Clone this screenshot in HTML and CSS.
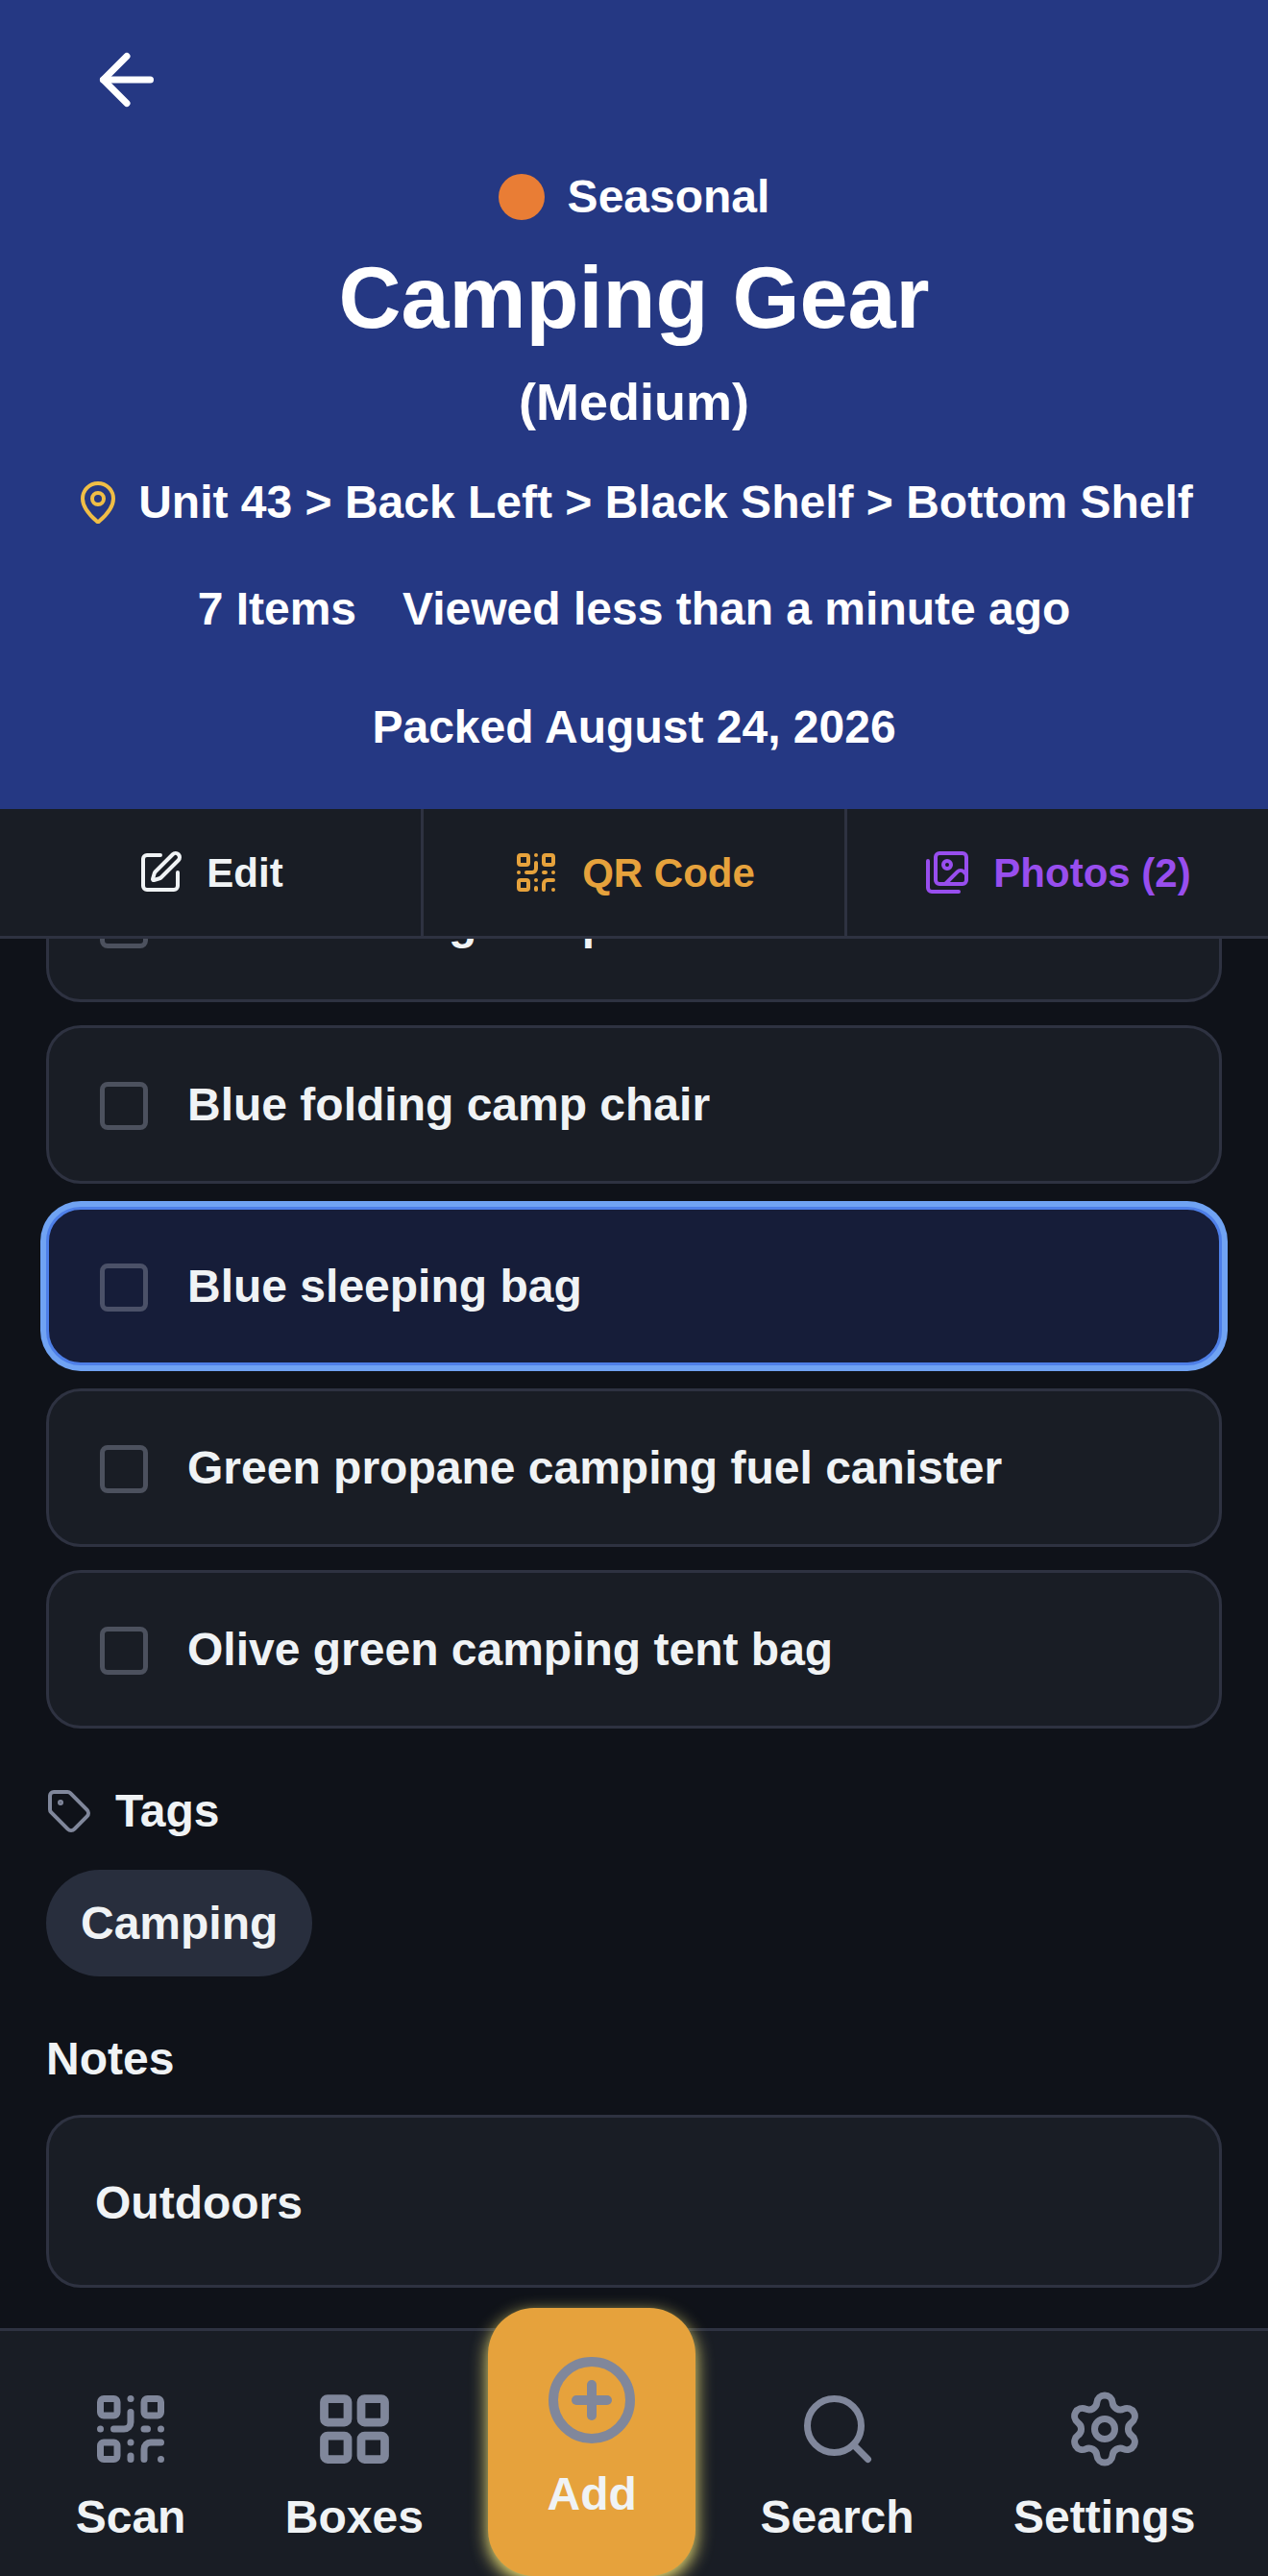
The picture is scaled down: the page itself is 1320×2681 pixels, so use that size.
FILE: index.html
```html
<!DOCTYPE html>
<html lang="en">
<head>
<meta charset="utf-8">
<meta name="viewport" content="width=device-width, initial-scale=1">
<title>Camping Gear</title>
<link rel="stylesheet" href="styles.css">
</head>
<body>
<svg class="sprite" aria-hidden="true">
  <symbol id="qr" viewBox="0 0 24 24">
    <rect width="5" height="5" x="3" y="3" rx="1"/><rect width="5" height="5" x="16" y="3" rx="1"/><rect width="5" height="5" x="3" y="16" rx="1"/>
    <path d="M21 16h-3a2 2 0 0 0-2 2v3"/><path d="M21 21v.01"/><path d="M12 7v3a2 2 0 0 1-2 2H7"/><path d="M3 12h.01"/><path d="M12 3h.01"/><path d="M12 16v.01"/><path d="M16 12h1"/><path d="M21 12v.01"/><path d="M12 21v-1"/>
  </symbol>
</svg>
<header class="hero">
  <button class="back" type="button" aria-label="Back">
    <svg class="icon icon-lg" viewBox="0 0 24 24"><path d="m12 19-7-7 7-7"/><path d="M19 12H5"/></svg>
  </button>
  <p class="category"><span class="dot"></span>Seasonal</p>
  <h1 class="title">Camping Gear</h1>
  <p class="size">(Medium)</p>
  <p class="location">
    <svg class="icon" viewBox="0 0 24 24"><path d="M20 10c0 4.993-5.539 10.193-7.399 11.799a1 1 0 0 1-1.202 0C9.539 20.193 4 14.993 4 10a8 8 0 0 1 16 0"/><circle cx="12" cy="10" r="3"/></svg>
    <span>Unit 43 &gt; Back Left &gt; Black Shelf &gt; Bottom Shelf</span>
  </p>
  <p class="meta"><span>7 Items</span><span>Viewed less than a minute ago</span></p>
  <p class="packed">Packed August 24, 2026</p>
</header>
<div class="actions">
  <button class="action" type="button">
    <svg class="icon" viewBox="0 0 24 24"><path d="M12 3H5a2 2 0 0 0-2 2v14a2 2 0 0 0 2 2h14a2 2 0 0 0 2-2v-7"/><path d="M18.375 2.625a1 1 0 0 1 3 3l-9.013 9.014a2 2 0 0 1-.853.505l-2.873.84a.5.5 0 0 1-.62-.62l.84-2.873a2 2 0 0 1 .506-.852z"/></svg>
    Edit
  </button>
  <button class="action action-qr" type="button">
    <svg class="icon"><use href="#qr"/></svg>
    QR Code
  </button>
  <button class="action action-photos" type="button">
    <svg class="icon" viewBox="0 0 24 24"><path d="M18 22H4a2 2 0 0 1-2-2V6"/><path d="m22 13-1.296-1.296a2.41 2.41 0 0 0-3.408 0L11 18"/><circle cx="12" cy="8" r="2"/><rect width="16" height="16" x="6" y="2" rx="2"/></svg>
    Photos (2)
  </button>
</div>
<main class="content">
  <ul class="items">
    <li><label class="item"><input class="check" type="checkbox">Black folding camp chair</label></li>
    <li><label class="item"><input class="check" type="checkbox">Blue folding camp chair</label></li>
    <li><label class="item item-selected"><input class="check" type="checkbox">Blue sleeping bag</label></li>
    <li><label class="item"><input class="check" type="checkbox">Green propane camping fuel canister</label></li>
    <li><label class="item"><input class="check" type="checkbox">Olive green camping tent bag</label></li>
  </ul>
  <section class="section">
    <h2 class="heading">
      <svg class="icon" viewBox="0 0 24 24"><path d="M12.586 2.586A2 2 0 0 0 11.172 2H4a2 2 0 0 0-2 2v7.172a2 2 0 0 0 .586 1.414l8.704 8.704a2.426 2.426 0 0 0 3.42 0l6.58-6.58a2.426 2.426 0 0 0 0-3.42z"/><circle cx="7.5" cy="7.5" r=".5"/></svg>
      Tags
    </h2>
    <span class="tag">Camping</span>
  </section>
  <section class="section">
    <h2 class="heading heading-notes">Notes</h2>
    <p class="note">Outdoors</p>
  </section>
</main>
<nav class="nav">
  <a class="tab" href="#scan"><svg class="icon icon-lg"><use href="#qr"/></svg>Scan</a>
  <a class="tab" href="#boxes"><svg class="icon icon-lg icon-bold" viewBox="0 0 24 24"><rect width="7" height="7" x="3" y="3" rx="1"/><rect width="7" height="7" x="14" y="3" rx="1"/><rect width="7" height="7" x="14" y="14" rx="1"/><rect width="7" height="7" x="3" y="14" rx="1"/></svg>Boxes</a>
  <a class="tab tab-add" href="#add"><svg class="icon icon-xl icon-bold" viewBox="0 0 24 24"><circle cx="12" cy="12" r="10"/><path d="M8 12h8"/><path d="M12 8v8"/></svg>Add</a>
  <a class="tab" href="#search"><svg class="icon icon-lg" viewBox="0 0 24 24"><path d="m21 21-4.34-4.34"/><circle cx="11" cy="11" r="8"/></svg>Search</a>
  <a class="tab" href="#settings"><svg class="icon icon-lg" viewBox="0 0 24 24"><path d="M9.671 4.136a2.34 2.34 0 0 1 4.659 0 2.34 2.34 0 0 0 3.319 1.915 2.34 2.34 0 0 1 2.33 4.033 2.34 2.34 0 0 0 0 3.831 2.34 2.34 0 0 1-2.33 4.033 2.34 2.34 0 0 0-3.319 1.915 2.34 2.34 0 0 1-4.659 0 2.34 2.34 0 0 0-3.32-1.915 2.34 2.34 0 0 1-2.33-4.033 2.34 2.34 0 0 0 0-3.831A2.34 2.34 0 0 1 6.35 6.051a2.34 2.34 0 0 0 3.319-1.915"/><circle cx="12" cy="12" r="3"/></svg>Settings</a>
</nav>
</body>
</html>
```

FILE: styles.css
```css
:root {
  --page: #0f1219;
  --surface: #191d25;
  --line: #2e3241;
  --text: #f0f3f5;
  --muted: #80879b;
  --amber: #e6a23c;
}

* { box-sizing: border-box; }

body {
  margin: 0;
  min-height: 100vh;
  display: flex;
  flex-direction: column;
  background: var(--page);
  color: var(--text);
  font: bold 48px/75px "Liberation Sans", Arial, sans-serif;
}

h1, h2, p, ul { margin: 0; padding: 0; font-size: inherit; }
ul { list-style: none; }
button { border: 0; padding: 0; background: none; color: inherit; font: inherit; cursor: pointer; }
a { color: inherit; text-decoration: none; }

.sprite { display: none; }

.icon {
  width: 48px;
  height: 48px;
  flex: none;
  fill: none;
  stroke: currentColor;
  stroke-width: 2;
  stroke-linecap: round;
  stroke-linejoin: round;
}
.icon-lg { width: 84px; height: 84px; }
.icon-xl { width: 96px; height: 96px; }
.icon-bold { stroke-width: 2.5; }

/* Box summary */
.hero {
  display: flex;
  flex-direction: column;
  align-items: center;
  padding: 41px 48px 48px;
  background: #253883;
  color: #fff;
  text-align: center;
}
.back { display: flex; align-self: flex-start; margin: 0 0 44px 42px; }
.category { display: flex; align-items: center; gap: 24px; line-height: 72px; }
.dot { width: 48px; height: 48px; border-radius: 50%; background: #e97d35; }
.title { margin-top: 12px; font-size: 90px; line-height: 114px; }
.size { margin-top: 9px; font-size: 54px; line-height: 84px; }
.location { display: flex; align-items: center; gap: 18px; margin: 25px -48px 0; }
.location .icon { color: #f0be46; }
.meta { display: flex; flex-wrap: wrap; justify-content: center; gap: 0 48px; margin-top: 36px; }
.packed { margin-top: 48px; }

/* Action bar */
.actions { display: flex; border-bottom: 3px solid var(--line); background: var(--surface); }
.action {
  display: flex;
  flex: 1 1 0;
  align-items: center;
  justify-content: center;
  gap: 24px;
  box-sizing: content-box;
  height: 132px;
  font-size: 42px;
  border-right: 3px solid var(--line);
}
.action:last-child { border-right: 0; }
.action-qr { color: var(--amber); }
.action-photos { color: #984eee; }

/* Scrolled content */
.content { flex: 1; overflow: hidden; padding: 0 48px 42px; }
.items { display: flex; flex-direction: column; gap: 24px; margin-top: -99px; }
.item {
  display: flex;
  align-items: center;
  gap: 36px;
  padding: 42px 48px;
  border: 3px solid var(--line);
  border-radius: 36px;
  background: var(--surface);
}
.item-selected { border-color: #4e7fe8; background: #161d39; box-shadow: 0 0 0 6px #70a3f3; }
.check {
  appearance: none;
  flex: none;
  width: 50px;
  height: 50px;
  margin: 7px 5px 5px;
  border: 5px solid #4c515e;
  border-radius: 8px;
}
.item-selected .check { border-color: #4b5168; }
.check:checked { background: #70a3f3; }

.section { margin-top: 48px; }
.heading { display: flex; align-items: center; gap: 24px; margin-bottom: 24px; }
.heading .icon { color: var(--muted); }
.heading circle { fill: currentColor; }
.heading-notes { margin-bottom: 21px; }
.tag { display: block; width: fit-content; padding: 18px 36px; border-radius: 56px; background: #282e3d; }
.note {
  padding: 50px 48px 46px;
  border: 3px solid var(--line);
  border-radius: 36px;
  background: var(--surface);
  line-height: 78px;
}

/* Bottom navigation */
.nav {
  display: flex;
  align-items: flex-start;
  justify-content: space-around;
  padding: 24px 24px 0 27px;
  border-top: 3px solid var(--line);
  background: var(--surface);
}
.tab { display: flex; flex-direction: column; align-items: center; gap: 12px; padding: 36px 36px 24px; }
.tab .icon { color: var(--muted); }
.tab-add {
  margin-top: -48px;
  padding: 48px 60px;
  border-radius: 48px;
  background: var(--amber);
  box-shadow: 0 6px 18px #f5e878;
}
```
